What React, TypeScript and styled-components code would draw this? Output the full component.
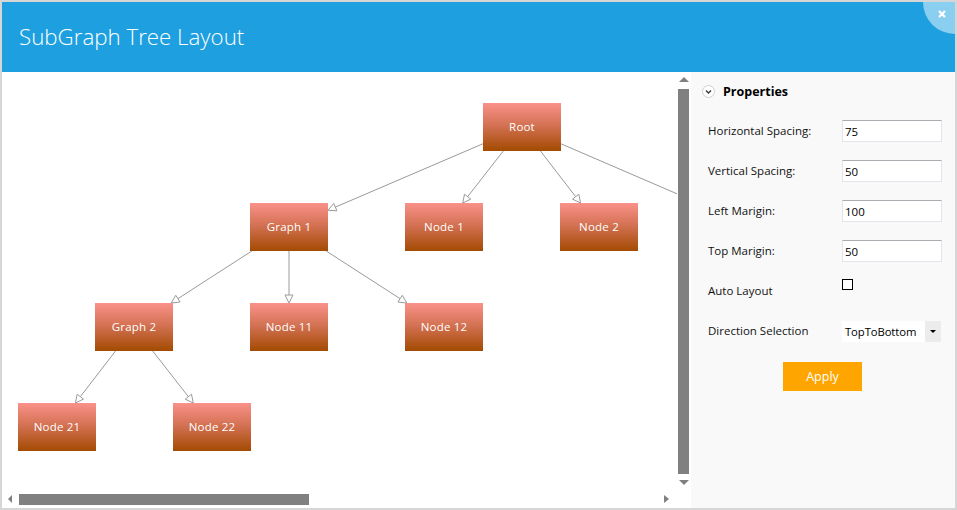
import React from "react";
import styled, { createGlobalStyle } from "styled-components";

const GlobalStyle = createGlobalStyle`
  html, body { margin: 0; padding: 0; background: #ffffff; }
  body { font-family: "Open Sans", "Noto Sans", sans-serif; }
  * { box-sizing: border-box; }
`;

const Frame = styled.div`
  width: 957px;
  height: 510px;
  border: 2px solid #d6d6d6;
  display: flex;
  flex-direction: column;
  background: #ffffff;
  overflow: hidden;
`;

const Header = styled.header`
  position: relative;
  flex: none;
  height: 70px;
  background: #1ea0e0;
  display: flex;
  align-items: center;
  padding-left: 17px;
  overflow: hidden;
`;

const Title = styled.h1`
  margin: 0 0 2px 0;
  font-family: "Open Sans", "Noto Sans", sans-serif;
  font-weight: 300;
  font-size: 22.3px;
  color: #ffffff;
`;

const CloseButton = styled.button`
  position: absolute;
  top: -32px;
  right: -32px;
  width: 64px;
  height: 64px;
  border-radius: 50%;
  border: none;
  padding: 0;
  background: #8bcff0;
  cursor: pointer;
`;

const CloseGlyph = styled.svg`
  position: absolute;
  left: 15px;
  top: 40px;
`;

const Body = styled.div`
  flex: 1;
  display: flex;
  min-height: 0;
`;

const CanvasArea = styled.div`
  flex: none;
  width: 689px;
  display: grid;
  grid-template-columns: 675px 14px;
  grid-template-rows: 418px 18px;
  background: #ffffff;
`;

const Viewport = styled.div`
  position: relative;
  overflow: hidden;
`;

const Edges = styled.svg`
  position: absolute;
  left: 0;
  top: 0;
`;

const NodeBox = styled.div`
  position: absolute;
  width: 78px;
  height: 48px;
  display: flex;
  align-items: center;
  justify-content: center;
  padding-bottom: 2px;
  background: linear-gradient(to bottom, #fa918a 0%, #d06f4e 50%, #a34b02 100%);
  color: #ffffff;
  font-size: 11.5px;
  letter-spacing: 0.2px;
`;

const VScroll = styled.div`
  display: flex;
  flex-direction: column;
  align-items: flex-start;
  padding: 5px 0 0 1px;
`;

const HScroll = styled.div`
  display: flex;
  align-items: flex-start;
  padding: 4px 8px 0 6px;
`;

const Thumb = styled.div<{ $w: number; $h: number }>`
  flex: none;
  width: ${(p) => p.$w}px;
  height: ${(p) => p.$h}px;
  background: #808080;
`;

const Arrow = styled.span<{ $dir: "up" | "down" | "left" | "right" }>`
  flex: none;
  display: block;
  width: 0;
  height: 0;
  ${(p) =>
    p.$dir === "up"
      ? "border-left: 5px solid transparent; border-right: 5px solid transparent; border-bottom: 5px solid #808080; margin-left: 1px;"
      : p.$dir === "down"
      ? "border-left: 5px solid transparent; border-right: 5px solid transparent; border-top: 5px solid #808080; margin-left: 1px;"
      : p.$dir === "left"
      ? "border-top: 4.5px solid transparent; border-bottom: 4.5px solid transparent; border-right: 4px solid #808080; margin-top: 1px;"
      : "border-top: 4.5px solid transparent; border-bottom: 4.5px solid transparent; border-left: 5px solid #808080; margin-top: 1px;"}
`;

const VThumbWrap = styled.div`
  margin: 7px 0 6px 0;
`;

const HThumbWrap = styled.div`
  margin-left: 7px;
  margin-right: auto;
`;

const Panel = styled.aside`
  flex: 1;
  background: #f9f9f9;
  padding-top: 8px;
  display: flex;
  flex-direction: column;
`;

const PanelHeader = styled.div`
  height: 22px;
  display: flex;
  align-items: center;
  gap: 8px;
  padding-left: 11px;
  margin-bottom: 9px;
  font-weight: 700;
  font-size: 12.5px;
  color: #000000;
`;

const Rows = styled.div`
  display: grid;
  grid-template-columns: 134px 100px;
  grid-auto-rows: 40px;
  padding-left: 17px;
  align-items: center;
`;

const Label = styled.label`
  font-size: 11.5px;
  color: #111111;
  padding-bottom: 2px;
`;

const TextInput = styled.input`
  width: 100px;
  height: 22px;
  margin: 0;
  padding: 0 2px;
  border: 1px solid #e2e6ec;
  border-top-color: #abadb3;
  background: #ffffff;
  font-family: "Open Sans", "Noto Sans", sans-serif;
  font-size: 11.5px;
  color: #000000;
  outline: none;
`;

const CheckBox = styled.span`
  align-self: start;
  margin: 8px 0 0 0;
  width: 11px;
  height: 11px;
  border: 1px solid #000000;
  background: #ffffff;
`;

const Select = styled.div`
  width: 99px;
  height: 21px;
  display: flex;
  background: #ffffff;
`;

const SelectText = styled.span`
  flex: 1;
  padding-left: 3px;
  display: flex;
  align-items: center;
  font-size: 11.3px;
  letter-spacing: -0.1px;
  color: #000000;
  white-space: nowrap;
  overflow: hidden;
`;

const SelectButton = styled.span`
  flex: none;
  width: 16px;
  background: #ececec;
  display: flex;
  align-items: center;
  justify-content: center;

  &::after {
    content: "";
    display: block;
    width: 0;
    height: 0;
    border-left: 3px solid transparent;
    border-right: 3px solid transparent;
    border-top: 3px solid #000000;
  }
`;

const ApplyButton = styled.button`
  align-self: center;
  margin: 11px 0 0 -1px;
  width: 79px;
  height: 29px;
  border: none;
  background: #ffa500;
  color: #ffffff;
  font-family: "Open Sans", "Noto Sans", sans-serif;
  font-size: 12.5px;
  cursor: pointer;
`;

type GNode = { id: string; label: string; x: number; y: number; offscreen?: boolean };

const NW = 78;
const NH = 48;

const nodes: GNode[] = [
  { id: "root", label: "Root", x: 481, y: 31 },
  { id: "g1", label: "Graph 1", x: 248, y: 131 },
  { id: "n1", label: "Node 1", x: 403, y: 131 },
  { id: "n2", label: "Node 2", x: 558, y: 131 },
  { id: "n3", label: "Node 3", x: 713, y: 131, offscreen: true },
  { id: "g2", label: "Graph 2", x: 93, y: 231 },
  { id: "n11", label: "Node 11", x: 248, y: 231 },
  { id: "n12", label: "Node 12", x: 403, y: 231 },
  { id: "n21", label: "Node 21", x: 16, y: 331 },
  { id: "n22", label: "Node 22", x: 171, y: 331 },
];

const links: [string, string][] = [
  ["root", "g1"],
  ["root", "n1"],
  ["root", "n2"],
  ["root", "n3"],
  ["g1", "g2"],
  ["g1", "n11"],
  ["g1", "n12"],
  ["g2", "n21"],
  ["g2", "n22"],
];

function edgeGeometry(a: GNode, b: GNode) {
  const ax = a.x + NW / 2;
  const ay = a.y + NH / 2;
  const bx = b.x + NW / 2;
  const by = b.y + NH / 2;
  const dx = bx - ax;
  const dy = by - ay;
  const tx = dx !== 0 ? NW / 2 / Math.abs(dx) : Infinity;
  const ty = dy !== 0 ? NH / 2 / Math.abs(dy) : Infinity;
  const t = Math.min(tx, ty);
  const sx = ax + dx * t;
  const sy = ay + dy * t;
  const ex = bx - dx * t;
  const ey = by - dy * t;
  const len = Math.hypot(dx, dy);
  const ux = dx / len;
  const uy = dy / len;
  const bxp = ex - ux * 8;
  const byp = ey - uy * 8;
  const nx = -uy;
  const ny = ux;
  const pts = `${ex},${ey} ${bxp + nx * 4},${byp + ny * 4} ${bxp - nx * 4},${byp - ny * 4}`;
  return { sx, sy, lx: bxp, ly: byp, pts };
}

const byId = (id: string) => nodes.find((n) => n.id === id)!;

const Diagram: React.FC = () => (
  <>
    <Edges width={800} height={420}>
      {links.map(([p, c]) => {
        const g = edgeGeometry(byId(p), byId(c));
        return (
          <g key={p + c}>
            <line x1={g.sx} y1={g.sy} x2={g.lx} y2={g.ly} stroke="#9a9a9a" strokeWidth={1} />
            <polygon points={g.pts} fill="#ffffff" stroke="#9a9a9a" strokeWidth={1} />
          </g>
        );
      })}
    </Edges>
    {nodes
      .filter((n) => !n.offscreen)
      .map((n) => (
        <NodeBox key={n.id} style={{ left: n.x, top: n.y }}>
          {n.label}
        </NodeBox>
      ))}
  </>
);

const ChevronCircle: React.FC = () => (
  <svg width="13" height="13" viewBox="0 0 13 13">
    <circle cx="6.5" cy="6.5" r="6" fill="#ffffff" stroke="#d0d0d0" strokeWidth="1" />
    <polyline points="4,5.5 6.5,8 9,5.5" fill="none" stroke="#333333" strokeWidth="1.3" />
  </svg>
);

export default function App() {
  return (
    <>
      <GlobalStyle />
      <Frame>
        <Header>
          <Title>SubGraph Tree Layout</Title>
          <CloseButton aria-label="Close">
            <CloseGlyph width="8" height="8" viewBox="0 0 8 8">
              <line x1="1" y1="1" x2="7" y2="7" stroke="#ffffff" strokeWidth="2.2" />
              <line x1="7" y1="1" x2="1" y2="7" stroke="#ffffff" strokeWidth="2.2" />
            </CloseGlyph>
          </CloseButton>
        </Header>
        <Body>
          <CanvasArea>
            <Viewport>
              <Diagram />
            </Viewport>
            <VScroll>
              <Arrow $dir="up" />
              <VThumbWrap>
                <Thumb $w={11} $h={385} />
              </VThumbWrap>
              <Arrow $dir="down" />
            </VScroll>
            <HScroll>
              <Arrow $dir="left" />
              <HThumbWrap>
                <Thumb $w={290} $h={11} />
              </HThumbWrap>
              <Arrow $dir="right" />
            </HScroll>
            <div />
          </CanvasArea>
          <Panel>
            <PanelHeader>
              <ChevronCircle />
              <span>Properties</span>
            </PanelHeader>
            <Rows>
              <Label>Horizontal Spacing:</Label>
              <TextInput defaultValue="75" />
              <Label>Vertical Spacing:</Label>
              <TextInput defaultValue="50" />
              <Label>Left Marigin:</Label>
              <TextInput defaultValue="100" />
              <Label>Top Marigin:</Label>
              <TextInput defaultValue="50" />
              <Label>Auto Layout</Label>
              <CheckBox />
              <Label>Direction Selection</Label>
              <Select>
                <SelectText>TopToBottom</SelectText>
                <SelectButton />
              </Select>
            </Rows>
            <ApplyButton>Apply</ApplyButton>
          </Panel>
        </Body>
      </Frame>
    </>
  );
}
